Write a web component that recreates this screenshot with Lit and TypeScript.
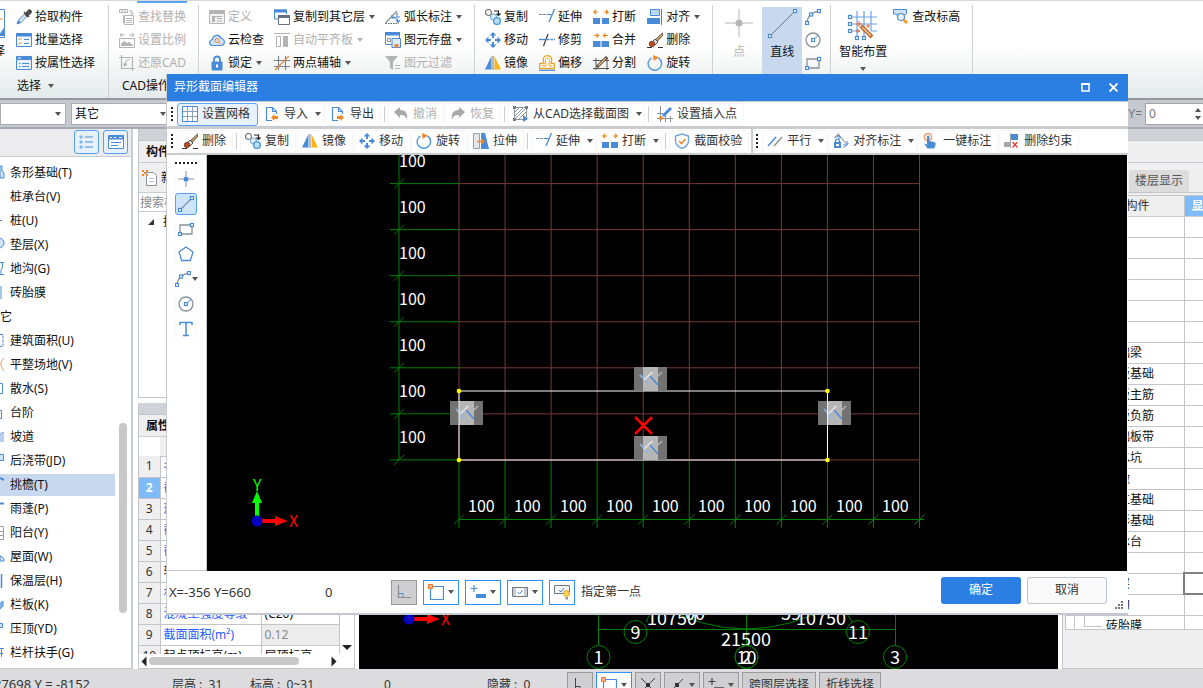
import { LitElement, html, svg, css, nothing } from "lit";
import { customElement } from "lit/decorators.js";
import { classMap } from "lit/directives/class-map.js";

const B = "#4a8bd8";
const G = "#8a9199";
const D = "#b4b4b4";
const O = "#f08a2c";

const node = (x: number, y: number) =>
  svg`<rect x=${x - 1.5} y=${y - 1.5} width="3" height="3" fill="#fff" stroke=${B} stroke-width="1.2"/>`;

const erase = svg`<path d="M0 15.5H5M11 15.5H16" stroke="#333"/><path d="M15.5 1 7 9l2 2 7-8z" fill="#c9a06a" stroke="#4a3a2c" stroke-width=".8"/><path d="m8 7-3 3 3 3 3-3z" fill="#ddd" stroke="#333" stroke-width=".8"/><circle cx="5" cy="12" r="2.8" fill="#c4471c" stroke="#333" stroke-width=".6"/>`;
const breakIcon = svg`<path d="M0 9h7v6H0zM9 9h7v6H9z" fill=${B}/><path d="M5 3H1M3 1 1 3l2 2M11 3h4M13 1l2 2-2 2" fill="none" stroke="#e8861c" stroke-width="1.2"/>`;
const arcIcon = svg`<path d="M2 14C2 8 7 3 14 2" fill="none" stroke=${G} stroke-width="1.3"/>${node(2, 14)}${node(6, 5.500)}${node(14, 2)}`;
const circleIcon = svg`<circle cx="8" cy="8" r="7" fill="none" stroke=${G} stroke-width="1.3"/><path d="m8 8 5-4.500" stroke=${B}/>${node(8, 8)}`;
const rectIcon = svg`<path d="M2 4h12v9H2z" fill="none" stroke=${G} stroke-width="1.3"/>${node(2, 13)}${node(14, 4)}`;
const lineIcon = svg`<path d="M1 15 15 1" stroke=${G} stroke-width="1.2"/>${node(2, 14)}${node(14, 2)}`;

const ICONS: Record<string, unknown> = {
  picker: svg`<path d="M1 15l1.500-4L9 4.500 11.500 7 5 13.500z" fill="#cfe3f8" stroke="#6b8db5"/><path d="M1 15l1.500-4 2.500 2.500z" fill=${B}/><path d="M8 3l5 5M9.500 5.500l2.500-3.500c2-2 4 0 2.500 2L11 7z" fill="#555" stroke="#444" stroke-width="1.6"/>`,
  batch: svg`<path d="M.5 1.500h15v13H.5z" fill="#f4f9ff" stroke=${B}/><path d="M.5 1.500h15v3H.5z" fill=${B}/><path d="m2.500 7 1 1 2-2M2.500 11l1 1 2-2" fill="none" stroke="#d8892c"/><path d="M8 7.500h5M8 11.500h5" stroke=${B}/>`,
  attr: svg`<path d="M.5 1.500h15v13H.5z" fill="#e8f2fd" stroke=${B}/><path d="M.5 1.500h15v3.500H.5z" fill=${B}/><path d="M2 3h3" stroke="#e8f2fd"/><path d="M3 8.500h1.500M6 8.500h7M3 11.500h1.500M6 11.500h7" stroke=${B}/>`,
  find: svg`<path d="M.5.500h8v3h-8zM3 .5v3M6 .5v3M10 2h3v3M11.500 4 13 5.500 14.500 4M5.500 6.500h9v9h-9zM7 9.500h6M7 11.500h6M7 13.500h6M4.500 6v8" fill="none" stroke=${D}/>`,
  scale: svg`<path d="M1 3h5M10 3h5M3 1 1 3l2 2M13 1l2 2-2 2M.5 6.500h15v9H.5z" fill="none" stroke=${D}/><path d="M2 14v-2l3-3 3 2 2-1 4 3v1z" fill=${D}/>`,
  restore: svg`<path d="M2.500 0v13.500H16M0 2.500h13.500V16M11 4.500C7 4.500 6 7 6 10.500M4 8.500 6 11l2-2.500" fill="none" stroke=${D} stroke-width="1.2"/>`,
  define: svg`<path d="M.5 1.500h15v13H.5z" fill="#f2f2f2" stroke=${D}/><path d="M.5 1.500h15v3.500H.5zM8 9h5v1H8zM8 11.500h5v1H8zM3 8h3v5H3zM3 7h10v1H3z" fill=${D}/>`,
  cloud: svg`<path d="M4 13.500C-.5 13.500 0 8 3.500 7.500 4 2.500 11 2 12 6.500c4.500.3 4.500 7 0 7z" fill="#cfe4fa" stroke=${B} stroke-width="1.2"/><circle cx="8" cy="8.500" r="2" fill="none" stroke=${O}/><path d="m9.500 10 2 2" stroke=${O}/>`,
  lock: svg`<path d="M5 8V4.500c0-4 6-4 6 0V8" fill="none" stroke=${B} stroke-width="1.8"/><rect x="2.500" y="6.500" width="11" height="9" rx="1" fill=${B}/><path d="M8 9.500v3" stroke="#fff" stroke-width="2"/>`,
  copylayer: svg`<path d="M.5 1v9H5M.5 1h12v4" fill="none" stroke=${B}/><path d="M0 .5h13v3H0z" fill=${B}/><path d="M4.500 6.500h11v9h-11z" fill="#fff" stroke="#66707c"/><path d="M4 6h12v3H4z" fill="#66707c"/>`,
  autoflat: svg`<path d="M0 1.500h16M2.500 4.500h4v10h-4z" fill="none" stroke=${D}/><path d="M9 4h5v11H9z" fill=${D}/>`,
  auxaxis: svg`<path d="M4.500 1v14M11.500 1v14M0 5.500h16M0 11.500h16" stroke="#77808a" stroke-width="1.1"/><path d="M1 15 15 1" stroke="#e08a3c" stroke-width="1.2"/>`,
  arclen: svg`<path d="M.5 14 12 2" stroke=${G} stroke-width="1.2"/><path d="M.5 14.500h13" stroke="#666" stroke-dasharray="1.500 1"/><path d="M7 8c4 0 6 2 6 5M7 6v3h3M11 11l2 2.500 2-2.500M12 4v4h3" fill="none" stroke=${B} stroke-width="1.2"/>`,
  save: svg`<path d="M.5.500h14v12h-14z" fill="#fff" stroke=${B}/><path d="M0 0h15v3.500H0z" fill=${B}/><path d="M2.500 6.500h3v3h-3z" fill="none" stroke=${G}/><path d="M7 6.500h8.500v9H7z" fill="#dcebfb" stroke=${B}/><path d="M9.500 12h4v3.500h-4z" fill=${O}/>`,
  filter: svg`<path d="M0 1h13L8 7v8l-3-2V7z" fill=${D}/><path d="M10 10.500h5M10 13.500h5" stroke=${D}/>`,
  copy: svg`<circle cx="3.500" cy="3.500" r="3" fill="#fff" stroke="#777" stroke-width="1.2"/><circle cx="8.500" cy="8" r="3" fill="#e8f2fd" stroke="#79a8d8" stroke-width="1.2"/><circle cx="12" cy="12" r="3.400" fill="#b9dcf5" stroke="#4a9bd8" stroke-width="1.400"/><path d="M9 2h4.500v4M11.500 4.500l2 2 2-2" fill="none" stroke="#222" stroke-width="1.200"/>`,
  move: svg`<path d="M8 0l3.500 3.500h-7zM8 16l3.500-3.500h-7zM0 8l3.500-3.500v7zM16 8l-3.500-3.500v7z" fill=${B}/><path d="M8 3v3M8 10v3M3 8h3M10 8h3" stroke=${B} stroke-width="2"/>`,
  mirror: svg`<path d="M0 14.500 6.500 1v13.500z" fill=${B}/><path d="M16 14.500 9.500 1v13.500z" fill="#fbb415"/><path d="M8 1v14" stroke="#777"/>`,
  extend: svg`<path d="M0 5.500h9" stroke="#7d8790" stroke-dasharray="3 1"/><path d="M9 5.500h3.500" stroke=${B} stroke-width="1.200"/><path d="M15.500 0 10 13" stroke=${B} stroke-width="1.300"/>`,
  trim: svg`<path d="M0 7.500h6" stroke=${B} stroke-width="1.400"/><path d="M8 7.500h8" stroke=${B} stroke-width="1.400" stroke-dasharray="2.500 1"/><path d="M9 2 4.500 14" stroke="#333" stroke-width="1.200"/>`,
  offset: svg`<path d="M5 8.500C3 3 5 .7 8.500.7S14 3 12 8.500h3.300v5H.7v-5z" fill="#fff" stroke="#eaa52c" stroke-width="1.300"/><path d="M3 11h4c.8-2-.8-4-.8-5.500 0-3 4.600-3 4.600 0C10.800 7 9.500 9 10 11h3.500" fill="none" stroke="#eaa52c"/><path d="M0 15.300h16" stroke=${B} stroke-width="1.200"/>`,
  break: breakIcon,
  merge: svg`<path d="M0 9h7.500v6H0zM8.500 9H16v6H8.500z" fill=${B}/><path d="M1 3.500h4.500M3.500 1.500 5.500 3.500l-2 2M15 3.500h-4.500M12.500 1.500l-2 2 2 2" fill="none" stroke="#e8861c" stroke-width="1.200"/>`,
  split: svg`<path d="M0 5.500h16M3 3v12M14 3v12M0 13.500h16" stroke="#555"/><path d="M4 12 14 2" stroke="#4d3a2b" stroke-width="3"/><path d="M5 11l8-8" stroke="#e9c08a" stroke-width="1.200"/>`,
  align: svg`<path d="M3.500.500h9v6h-9z" fill="#bcd9f7" stroke=${B}/><path d="M0 9h13v6H0z" fill=${B}/><path d="M14.500 0v16" stroke="#777"/>`,
  erase,
  rotate: svg`<path d="M4.500 2.800a6.700 6.700 0 1 0 7 .2" fill="none" stroke="#5a9ae0" stroke-width="1.500"/><path d="M6 0l6 2.500L6.500 6z" fill=${O}/>`,
  rect: rectIcon,
  arc: arcIcon,
  circle: circleIcon,
  line: lineIcon,
  elev: svg`<path d="M.5.500h13v4l-5 4.500h-3L3.500 5H.5z" fill="#cfe3f8" stroke=${B}/><circle cx="8" cy="8" r="3.500" fill="#e8f2fd" stroke="#5b8bc0" stroke-width="1.200"/><path d="m11 11 3 3" stroke="#f0a01c" stroke-width="3"/>`,
  grid: svg`<path d="M.5.500h15v15H.5z" fill="#fff" stroke=${B}/><path d="M5.500 1v14M10.500 1v14M1 5.500h14M1 10.500h14" stroke="#8fa3b8"/>`,
  import: svg`<path d="M8 14.500H2.500v-13h6l4 4V8M8.500 1.500v4h4" fill="none" stroke=${B} stroke-width="1.200"/><path d="M7 11.500l3.500-3.500v2H14v3h-3.500v2z" fill=${O}/>`,
  export: svg`<path d="M8 14.500H2.500v-13h6l4 4V8M8.500 1.500v4h4" fill="none" stroke=${B} stroke-width="1.200"/><path d="M14 11.500l-3.500-3.500v2H7v3h3.500v2z" fill=${O}/>`,
  undo: svg`<path d="M1 6l6-5v3c6 0 8 4 7 10-1-4-3-5-7-5v3z" fill="#a8a8a8"/>`,
  redo: svg`<path d="M15 6 9 1v3c-6 0-8 4-7 10 1-4 3-5 7-5v3z" fill="#a8a8a8"/>`,
  fromcad: svg`<path d="M1.500 1.500h12v12h-12z" fill="none" stroke="#8a929b"/><path d="M2 6 6 2M2 10l8-8M2 13 13 2M6 13l7-7" stroke="#8a929b"/><path d="M0 0h3v3H0zM12 0h3v3h-3zM0 12h3v3H0z" fill="#77808a"/><path d="M10 9v7l5-3z" fill=${B}/>`,
  insertpt: svg`<path d="M3.500 0v16M8.500 6v10M0 12.500h16M0 7.500h6M13.500 10v6" stroke="#8a929b"/><path d="m6 10 8-8" stroke=${B} stroke-width="3"/><circle cx="4" cy="12" r="2" fill=${O}/>`,
  stretch: svg`<path d="M.5.500h6v15h-6z" fill="#e6e8ec" stroke="#999fa8"/><path d="M8 0h4l4 16H8z" fill=${B}/><path d="M4 8.500h6M8 6l3 2.500L8 11" fill="none" stroke=${O} stroke-width="1.300"/>`,
  check: svg`<path d="M8 1l6.500 2v5c0 4-3 6-6.500 7.500C4.500 14 1.500 12 1.500 8V3z" fill="#fff" stroke="#6ea4e0" stroke-width="1.400"/><path d="m5 8 2.500 2.500L11.500 6" fill="none" stroke=${O} stroke-width="1.600"/>`,
  parallel: svg`<path d="M1 13 9 4" stroke=${B} stroke-width="1.500"/><path d="M7 13l8-9" stroke=${G} stroke-width="1.500"/>`,
  aligndim: svg`<path d="M1.500 5 6 .5M6 2.500l8 9" fill="none" stroke=${G} stroke-width="1.100"/><path d="M6 2v4M4 4.500 6 2l2 3M14 8v4h-4M10.500 15 15.500 10" fill="none" stroke=${B}/><path d="M2.500 9V8c0-2.500 4-2.500 4 0v1" fill="none" stroke=${B} stroke-width="1.300"/><path d="M1 9h7v6H1z" fill=${B}/><path d="M3 11h3v2H3z" fill="#fff"/>`,
  onekey: svg`<circle cx="5" cy="4" r="3.600" fill="none" stroke="#f09a6a" stroke-width="1.500"/><path d="M4 4c0-2 2.500-2 2.500 0v4l6 1.500v3L11 15.500H4.500L1 10.500l3 1z" fill=${B}/>`,
  delcon: svg`<path d="M7 1h7v6H7z" fill=${B}/><path d="M0 9h6v5H0z" fill="#a2a6ac"/><path d="M6.500 0v15" stroke="#a2a6ac"/><path d="m8.500 9 5 5.500M13.500 9l-5 5.500" stroke="#e0382c" stroke-width="1.200"/>`,
  dot: svg`<path d="M8 0v5M8 11v5M0 8h5M11 8h5" stroke=${G}/><circle cx="8" cy="8" r="2.600" fill=${B}/>`,
  polygon: svg`<path d="M8 1l7 5-2.700 8.500H3.700L1 6z" fill="none" stroke=${B} stroke-width="1.300"/>`,
  text: svg`<path d="M2 4V1.500h12V4M8 1.500v13M5 14.500h6" fill="none" stroke=${B} stroke-width="1.500"/>`,
  list: svg`<path d="M1 2h2v2H1zM1 7h2v2H1zM1 12h2v2H1z" fill="#7db5f3" stroke="#7db5f3"/><path d="M6 3h8M6 8h8M6 13h8" stroke=${B}/>`,
  card: svg`<path d="M.5 1.500h15v13H.5z" fill="#fff" stroke=${B}/><path d="M.5 1.500h15v4H.5z" fill=${B}/><path d="M2 3.500h2M6 3.500h2M11 3.500h3" stroke="#fff"/><path d="M3 8.500h10M3 11.500h7" stroke=${B}/>`,
  newdoc: svg`<path d="M4.500 2.500h7l3 3v10h-10z" fill="#fff" stroke="#8a9199"/><path d="M7 8.500h5M7 11.500h5" stroke="#b9bec4"/><path d="M0 0h2v2H0zM4 0h2v2H4zM2 2h2v2H2zM0 4h2v2H0zM4 4h2v2H4z" fill=${O}/>`,
  ortho: svg`<path d="M2.500 1v12.500H15" fill="none" stroke="#8c8c8c" stroke-width="1.200"/><path d="M3 9.500h4v4" fill="none" stroke=${B}/>`,
  orthoDark: svg`<path d="M3.500 1v12.500H15M4 9.500h4v4" fill="none" stroke="#444"/>`,
  snap: svg`<path d="M2.500 2.500h13v13h-13z" fill="#fff" stroke=${B} stroke-width="1.200"/><path d="M.5.500h4v4h-4z" fill="#f5b183" stroke="#ee7a30"/>`,
  dyn: svg`<path d="M4 1v7M.5 4.500h7" stroke=${B} stroke-width="1.200"/><path d="M6 10h10v4H6z" fill=${B}/>`,
  dynDark: svg`<path d="M4 1v7M.5 4.500h7" stroke="#444" stroke-width="1.200"/><path d="M6 10h10v4H6z" fill="#666"/>`,
  cross: svg`<path d="m1 1 14 14M15 1 1 15" stroke="#444"/><path d="M6 6h4v4H6z" fill="#333"/>`,
  mid: svg`<path d="M2 14 14 2" stroke="#444"/><path d="M6 6h4v4H6z" fill="#333"/>`,
  tick: svg`<path d="M.5 3.500h15v9H.5z" fill="#fff" stroke="#6d7884"/><path d="M1 4h3v8H1zM12 4h3v8h-3z" fill="#c9cdd2"/><path d="m5.500 8 2 2 3-4" fill="none" stroke=${B}/>`,
  bulb: svg`<path d="M.5 1.500h15v8H.5z" fill="#f2f4f6" stroke="#6d7884"/><path d="m5 6 2 2 3-4" fill="none" stroke=${B}/><circle cx="12.500" cy="9.500" r="3" fill="#fcd34f" stroke="#e0a820"/><path d="M11.500 13h2.500v2.500h-2.500z" fill="#999"/>`,
};

const icon = (name: string) =>
  html`<svg class="i" viewBox="0 0 16 16" aria-hidden="true">${ICONS[name]}</svg>`;
const caret = html`<span class="caret"></span>`;

interface Item { i: string; t: string; off?: boolean; more?: boolean; on?: boolean }
const it = (i: string, t: string, flags = ""): Item => ({
  i, t, off: flags.includes("x"), more: flags.includes("v"), on: flags.includes("s"),
});

const EDIT_COLS: Item[][] = [
  [it("copy", "复制"), it("move", "移动"), it("mirror", "镜像")],
  [it("extend", "延伸"), it("trim", "修剪"), it("offset", "偏移")],
  [it("break", "打断"), it("merge", "合并"), it("split", "分割")],
  [it("align", "对齐", "v"), it("erase", "删除"), it("rotate", "旋转")],
];
const COMMON_COLS: Item[][] = [
  [it("define", "定义", "x"), it("cloud", "云检查"), it("lock", "锁定", "v")],
  [it("copylayer", "复制到其它层", "v"), it("autoflat", "自动平齐板", "xv"), it("auxaxis", "两点辅轴", "v")],
  [it("arclen", "弧长标注", "v"), it("save", "图元存盘", "v"), it("filter", "图元过滤", "x")],
];

const TREE: { t: string; p?: unknown; head?: boolean; on?: boolean }[] = [
  { t: "条形基础(T)", p: svg`<path d="M0 1h2v5l2 2v5H0z" fill="#cfe3f8" stroke="#4a8bd8"/>` },
  { t: "桩承台(V)" },
  { t: "桩(U)", p: svg`<path d="M0 7.500h2" stroke="#4a8bd8"/>` },
  { t: "垫层(X)", p: svg`<circle cx="-1" cy="6" r="5" fill="#cfe3f8" stroke="#4a8bd8"/>` },
  { t: "地沟(G)", p: svg`<path d="M0 1.500h4M0 13.500h4M2.500 2v4L1 9v4" fill="none" stroke="#4a8bd8"/>` },
  { t: "砖胎膜", p: svg`<path d="M1 1v13" stroke="#4a8bd8"/>` },
  { t: "其它", head: true },
  { t: "建筑面积(U)", p: svg`<path d="M0 1.500h3v12H0" fill="none" stroke="#4a8bd8" stroke-dasharray="3 1"/>` },
  { t: "平整场地(V)", p: svg`<path d="M4 1 1 5v4l3 5" fill="none" stroke="#e0a070"/>` },
  { t: "散水(S)", p: svg`<path d="M0 2.500h2.500v10H0" fill="none" stroke="#4a8bd8"/>` },
  { t: "台阶", p: svg`<path d="M0 5.500h1.500v8H0" fill="none" stroke="#4a8bd8"/>` },
  { t: "坡道", p: svg`<path d="M0 5 3 3v10M1 5v8" fill="none" stroke="#6f9fd8"/>` },
  { t: "后浇带(JD)", p: svg`<path d="M0 1.500h3.500v6H0" fill="#cfe3f8" stroke="#4a8bd8"/>` },
  { t: "挑檐(T)", p: svg`<path d="M0 1 4 3" stroke="#4a8bd8" stroke-width="2"/>`, on: true },
  { t: "雨蓬(P)", p: svg`<path d="M0 2.500h4" stroke="#4a8bd8" stroke-width="2"/>` },
  { t: "阳台(Y)", p: svg`<path d="M0 1.500h3.500v13H0M0 6.500h3.500M0 10.500h3.500" fill="none" stroke="#9a9fa6"/>` },
  { t: "屋面(W)", p: svg`<path d="M0 7h1l3 3v2H0z" fill="#cfe3f8" stroke="#4a8bd8"/>` },
  { t: "保温层(H)", p: svg`<path d="M1.500 1v14" stroke="#4a8bd8" stroke-width="1.500"/>` },
  { t: "栏板(K)", p: svg`<path d="M0 6.500 3 4v5l-3 3" fill="#8db9ea" stroke="#4a8bd8"/>` },
  { t: "压顶(YD)", p: svg`<path d="M0 2.500h2.500v4H0" fill="#cfe3f8" stroke="#4a8bd8"/>` },
  { t: "栏杆扶手(G)", p: svg`<path d="M0 3.500h4M1.500 4v8M0 8.500h3" stroke="#4a8bd8"/>` },
];

const PROPS: { n: string; v: string; plain?: boolean; dim?: boolean }[] = [
  { n: "名称", v: "TY-1" }, { n: "截面形状", v: "异形" }, { n: "形状类型", v: "异形" },
  { n: "截面宽度(mm)", v: "800" }, { n: "截面高度(mm)", v: "150" }, { n: "轴线距左边", v: "(400)", plain: true },
  { n: "材质", v: "混凝土" }, { n: "混凝土强度等级", v: "(C20)" },
  { n: "截面面积(m²)", v: "0.12", dim: true }, { n: "起点顶标高(m)", v: "层顶标高", plain: true },
];

const LEVEL_ROWS = ["", "", "", "", "", "", "基础梁", "筏板基础", "筏板主筋", "筏板负筋", "基础板带", "集水坑",
  "柱墩", "独立基础", "条形基础", "桩承台", "桩", "垫层", "地沟", "砖胎膜"];

const ROW1: (Item | null)[] = [
  it("grid", "设置网格", "s"), it("import", "导入", "v"), it("export", "导出"), null,
  it("undo", "撤消", "x"), it("redo", "恢复", "x"), null,
  it("fromcad", "从CAD选择截面图", "v"), null, it("insertpt", "设置插入点"),
];
const ROW2A: (Item | null)[] = [
  it("erase", "删除"), null, it("copy", "复制"), it("mirror", "镜像"), it("move", "移动"),
  it("rotate", "旋转"), it("stretch", "拉伸"), null, it("extend", "延伸", "v"), it("break", "打断", "v"),
  null, it("check", "截面校验"),
];
const ROW2B: (Item | null)[] = [
  it("parallel", "平行", "v"), it("aligndim", "对齐标注", "v"), it("onekey", "一键标注"), it("delcon", "删除约束"),
];
const DRAW: [string, string][] = [
  ["dot", "点"], ["line", "直线"], ["rect", "矩形"], ["polygon", "多边形"], ["arc", "弧"], ["circle", "圆"], ["text", "文字"],
];

@customElement("app-root")
export class AppRoot extends LitElement {
  static styles = css`
    :host {
      display: flex; flex-direction: column; position: relative; height: 100vh; overflow: hidden;
      font: 12px/16px "Noto Sans", "Noto Sans CJK SC", sans-serif; color: #111; background: #fff;
    }
    * { box-sizing: border-box; }
    button, input, select { font: inherit; color: inherit; margin: 0; padding: 0; border: 0; background: none; border-radius: 0; }
    button { display: flex; align-items: center; white-space: nowrap; }
    button:disabled { color: #b0b0b0; }
    .i { width: 16px; height: 16px; flex: none; display: block; }
    .caret { width: 0; height: 0; flex: none; border: 3px solid transparent; border-top: 4px solid #555; border-bottom: 0; }
    :disabled > .caret { border-top-color: #b4b4b4; }

    .ribbon { flex: none; display: flex; padding: 4px 0 0; height: 100px; overflow: hidden; border-top: 1px solid #d5d8da;
      border-bottom: 2px solid #94979c; background: linear-gradient(#fff 45%, #e5eaea); position: relative; }
    .tab { position: absolute; left: 137px; top: -1px; width: 50px; height: 3px; background: #5ca5f5; }
    .group { display: flex; flex-direction: column; padding: 0 12px 0 10px; border-right: 1px solid #cfd2d4; flex: none; }
    .group.first { padding: 0 13px 0 0; }
    .cols { display: flex; gap: 11px; height: 69px; }
    .common .cols { gap: 10px; }
    .col { display: grid; grid-template-rows: repeat(3, 23px); }
    .col button { gap: 3px; }
    .col .caret { margin-left: 1px; }
    .glabel { display: flex; align-items: center; justify-content: center; gap: 7px; height: 24px; white-space: nowrap; }
    .first .glabel { justify-content: flex-start; padding-left: 17px; }
    .frag { width: 5px; height: 60px; overflow: hidden; position: relative; }
    .frag svg { display: block; margin-top: 4px; }
    .frag span { display: block; width: 24px; margin: 5px 0 0 -19px; }
    .shapes { padding: 0 9px 0 6px; }
    .shapes .cols { gap: 3px; }
    .big { flex-direction: column; width: 40px; padding-top: 2px; gap: 5px; }
    .big svg { width: 32px; height: 32px; display: block; }
    .big.on { background: #c8d9ef; margin-top: 2px; padding-top: 0; }
    .big.smart { width: 48px; padding-top: 4px; gap: 3px; }
    .big.smart .caret { margin-top: 4px; }
    .layout { padding-left: 8px; }
    .layout .cols { gap: 6px; }

    .combos { flex: none; display: flex; height: 29px; padding: 3px 0; gap: 5px; background: #c6c9d0; border-bottom: 2px solid #a6a9af; }
    .combo { position: relative; width: 66px; height: 22px; display: flex; align-items: center; }
    .combo.wide { width: 100px; }
    .combo select { appearance: none; width: 100%; height: 22px; padding-left: 3px; background: #fff; border: 1px solid #a9acb2; }
    .combo .caret { position: absolute; right: 5px; }
    .ylab { margin-left: auto; display: flex; align-items: center; height: 22px; color: #777; gap: 3px; }
    .spin { display: flex; width: 58px; height: 22px; background: #fff; border: 1px solid #a0a3a8; border-right: 0; }
    .spin input { width: 100%; min-width: 0; padding-left: 3px; }
    .updn { width: 10px; flex: none; display: flex; flex-direction: column; justify-content: center; align-items: center; gap: 4px; }
    .updn .caret:first-child { transform: rotate(180deg); }

    .main { flex: 1; min-height: 0; display: grid; grid-template-columns: 134px 217px 1fr 141px; grid-template-rows: 100%; gap: 0 4px; }
    .left { border-right: 2px solid #c9ccd2; width: 133px; display: flex; flex-direction: column; min-height: 0; border-bottom: 1px solid #c3c5cb; }
    .ltools { flex: none; height: 28px; display: flex; justify-content: flex-end; gap: 4px; padding: 1px 3px 0 0; background: #ececee; border-bottom: 1px solid #c9ccd2; }
    .ltools button { width: 25px; height: 24px; justify-content: center; border: 1px solid #56a0f2; border-radius: 3px; background: #e6f1fd; }
    .treebox { flex: 1; min-height: 0; overflow: hidden; position: relative; }
    .tree { margin: 0; padding: 4px 0 0; list-style: none; }
    .tree li { display: flex; align-items: center; height: 24px; width: 115px; gap: 5px; white-space: nowrap; }
    .tree li.on { height: 22px; margin: 1px 0; background: #c8d9ef; }
    .tree li.head span { margin-left: -12px; }
    .tree svg { width: 5px; height: 16px; flex: none; overflow: hidden; }
    .bar { position: absolute; left: 119px; top: 266px; width: 8px; height: 190px; border-radius: 4px; background: #c8c8c8; }

    .mid { display: grid; grid-template-rows: 1fr 266px; gap: 5px; min-height: 0; }
    .pane { border: 1px solid #c3c5cb; border-top: 0; display: flex; flex-direction: column; min-height: 0; overflow: hidden; }
    .strip { flex: none; height: 12px; background: #d0d2d8; border-bottom: 1px solid #c3c5cb; }
    .title { flex: none; height: 22px; padding: 3px 7px; background: #efefef; font-weight: 600; border-bottom: 1px solid #c9ccd2; }
    .ptools { flex: none; height: 30px; background: #efefef; border-bottom: 1px solid #c9ccd2; display: flex; align-items: center; padding-left: 3px; }
    .ptools button { gap: 3px; }
    .search { flex: none; height: 19px; padding-left: 1px; border-bottom: 1px solid #c9ccd2; width: 100%; }
    .search::placeholder { color: #888; opacity: 1; }
    .leaf { padding: 2px 0 0 9px; display: flex; gap: 9px; align-items: center; }
    .tri { width: 0; height: 0; border-left: 6px solid transparent; border-bottom: 6px solid #333; }
    .props { flex: 1; min-height: 0; display: flex; overflow: hidden; }
    table { border-collapse: collapse; table-layout: fixed; }
    .ptable { width: 201px; flex: none; height: 0; }
    .ptable td, .ptable th { height: 21px; padding: 0 0 0 3px; border-right: 1px solid #c3c5cb; border-bottom: 1px solid #c3c5cb; white-space: nowrap; overflow: hidden; line-height: 16px; font-weight: 400; text-align: left; }
    .ptable .hd td { height: 19px; background: #efefef; }
    .ptable .hd td:first-child { background: #fff; border: 0; width: 21px; padding: 0; }
    .ptable th { background: #efefef; color: #333; text-align: center; padding: 0; }
    .ptable .n { width: 101px; color: #1f5cff; }
    .ptable .n.plain { color: #111; }
    .ptable .sel th { background: #7fbbfa; color: #fff; font-weight: 700; }
    .ptable .dim { color: #888; background: #ececec; }
    .vs { flex: 1; display: flex; justify-content: center; align-items: flex-end; padding-bottom: 4px; }
    .vs .caret, .hs .caret { border-width: 5px; border-bottom: 0; border-top-color: #222; }
    .hs { flex: none; height: 14px; display: flex; align-items: center; justify-content: space-between; padding: 0 15px 0 0; }
    .hs .caret:first-child { transform: rotate(90deg); }
    .hs .caret:last-child { transform: rotate(-90deg); }
    .thumb { width: 151px; height: 8px; margin-right: 30px; border-radius: 4px; background: #c8c8c8; }

    .view { background: #000; min-width: 0; }
    .view svg, .stage svg { display: block; width: 100%; height: 100%; overflow: hidden; }
    .cad { font-family: "Noto Sans CJK SC", sans-serif; }

    .right { background: #efefef; border-left: 1px solid #c3c5cb; border-bottom: 1px solid #c3c5cb; overflow: hidden; }
    .rspace { height: 22px; border-bottom: 1px solid #c9ccd2; }
    .rtabs { height: 30px; padding: 7px 0 0 66px; border-bottom: 1px solid #c3c5cb; display: flex; }
    .rtabs button { height: 22px; padding: 0 6px; background: #dcdcdc; color: #555; border-radius: 3px 3px 0 0; }
    .lwrap { margin: 2px 0 0 2px; height: 435px; overflow: hidden; border: 1px solid #c3c5cb; border-right: 0; background: #fff; }
    .ltable { width: 160px; }
    .ltable th { height: 20px; font-weight: 400; background: #efefef; color: #333; border-bottom: 1px solid #c9ccd2; border-right: 1px solid #c3c5cb; padding: 0; }
    .ltable th:first-child { width: 118px; text-align: right; padding-right: 34px; }
    .ltable th.on { background: #7fbbfa; color: #fff; font-weight: 700; text-align: left; padding-left: 7px; }
    .ltable td { height: 21px; padding: 0 0 0 40px; border-right: 1px solid #c3c5cb; border-bottom: 1px solid #c3c5cb; white-space: nowrap; }
    .ltable td.focus { outline: 2px solid #808080; outline-offset: -1px; }
    .ltable tr:last-child td:first-child { background: linear-gradient(#c3c5cb, #c3c5cb) 8px 0 / 1px 100% no-repeat, linear-gradient(#c3c5cb, #c3c5cb) 18px 0 / 1px 10px no-repeat, linear-gradient(#c3c5cb, #c3c5cb) 18px 10px / 18px 1px no-repeat; }

    .status { flex: none; height: 19px; display: flex; background: #dcdcde; overflow: hidden; padding-top: 3px; color: #333; }
    .status > span { line-height: 25px; height: 25px; flex: none; white-space: pre; }
    .sa { width: 172px; } .sb { width: 78px; } .sc { width: 134px; } .sd { width: 103px; } .se { width: 80px; }
    .sa span { margin-left: -6px; font-size: 13px; }
    .tgls { display: flex; gap: 3px; }
    .tgl { height: 25px; min-width: 25px; justify-content: center; gap: 4px; padding: 0 4px; border: 1px solid #9a9a9c; background: #cfcfd1; }
    .tgl.on { border-color: #2f93f5; background: #fff; }
    .tgl.txt { padding: 0 6px; }

    .dialog { position: absolute; inset: 74px 75px 74px 167px; display: flex; flex-direction: column; background: #fff;
      border-bottom: 1px solid #bfc6d6; outline: 1px solid #c6c9d0; outline-offset: 0; clip-path: inset(0 0 -1px -1px); }
    .dtitle { flex: none; height: 28px; margin-left: -1px; background: #2c7fe2; color: #fff; display: flex; align-items: center; padding: 0 10px 1px 8px; border-bottom: 1px solid #c9ccd1; }
    .dtitle h1 { flex: 1; margin: 0; font-size: 12px; line-height: 16px; font-weight: 400; }
    .dtitle button { width: 28px; justify-content: flex-end; }
    .dtitle svg { width: 9px; height: 9px; }
    .tb { flex: none; display: flex; align-items: center; height: 26px; padding: 0 0 0 4px; gap: 1px; border-bottom: 2px solid #c9ccd1; color: #333; }
    .tb.one { height: 27px; border-bottom-width: 3px; }
    .dots { width: 2px; height: 14px; margin-right: 3px; flex: none; background: repeating-linear-gradient(#222 0 2px, transparent 2px 4px); }
    .tb button { height: 23px; padding: 0 6px 0 4px; gap: 4px; border: 1px solid #f6f6f7; border-radius: 3px; }
    .tb button.more { padding-right: 2px; }
    .tb .caret { margin-left: 3px; }
    .tb button.on { border-color: #5aa3f3; background: #e7f2fe; padding-right: 7px; }
    .sep { width: 1px; height: 16px; margin: 0 2px; background: #c9ccd1; }
    .split { width: 2px; height: 24px; margin: 0 2px 0 1px; background: #c9ccd1; }
    .body { flex: 1; min-height: 0; display: flex; }
    .side { width: 40px; flex: none; border-right: 1px solid #c6c9d0; border-bottom: 1px solid #c6c9d0; padding: 7px 0 0 8px; display: flex; flex-direction: column; gap: 3px; }
    .hdots { width: 22px; height: 2px; margin-bottom: 1px; background: repeating-linear-gradient(90deg, #222 0 2px, transparent 2px 4px); }
    .side button { width: 22px; height: 22px; justify-content: center; border-radius: 3px; border: 1px solid #fafafa; flex: none; }
    .side button.on { border-color: #56a0f2; background: #cce4fd; }
    .side button.more { width: 28px; margin-left: -3px; gap: 1px; }
    .stage { flex: 1; min-width: 0; background: #000; margin-right: 1px; }
    .foot { flex: none; height: 42px; display: flex; align-items: center; padding: 0 21px 0 2px; gap: 6px; color: #333; position: relative; }
    .xy { width: 150px; font-size: 13px; white-space: nowrap; }
    .z { width: 60px; font-size: 13px; }
    .ok, .cancel { width: 80px; height: 27px; justify-content: center; border-radius: 3px; margin-bottom: 4px; }
    .ok { background: #2c7fe2; color: #fff; margin-left: auto; }
    .cancel { border: 1px solid #bcc3d3; background: #fafafa; }
    .grip { position: absolute; right: 4px; bottom: 3px; width: 9px; height: 9px; }
  `;

  private ribbonCol(items: Item[]) {
    return html`<div class="col">${items.map(
      (b) => html`<button ?disabled=${b.off}>${icon(b.i)}<span>${b.t}</span>${b.more ? caret : nothing}</button>`)}</div>`;
  }

  private tools(items: (Item | null)[]) {
    return items.map((b) => b
      ? html`<button class=${classMap({ on: !!b.on, more: !!b.more })} ?disabled=${b.off}>${icon(b.i)}<span>${b.t}</span>${b.more ? caret : nothing}</button>`
      : html`<span class="sep"></span>`);
  }

  private axes(x: number, y: number) {
    return svg`<path d="M${x} ${y}h20" stroke="red" stroke-width="4"/><path d="M${x + 18} ${y - 5}l13 5-13 5z" fill="red"/>
      <path d="M${x} ${y}v-20" stroke="lime" stroke-width="4"/><path d="M${x - 5} ${y - 18}l5-12 5 12z" fill="lime"/>
      <circle cx=${x} cy=${y} r="5.500" fill="#0000c0"/>
      <text x=${x + 32} y=${y + 6} fill="red" font-size="16">X</text><text x=${x - 4} y=${y - 30} fill="lime" font-size="16">Y</text>`;
  }

  private stage() {
    const step = 46.05;
    const xs = Array.from({ length: 11 }, (_, k) => 252 + step * k);
    const ys = Array.from({ length: 7 }, (_, k) => 304.9 - step * k);
    const mark = (x: number, y: number) => svg`<g transform="translate(${x} ${y})">
      <path d="M0 0h33v24H0z" fill="#787878" fill-opacity=".95"/><path d="M9 0h15v24H9z" fill="#b6b6b6"/>
      <path d="M6 8l8.500 9" stroke="#8db9ea" stroke-width="1.500"/><path d="M10 13l8.500-8" stroke="#e6e6e6" stroke-width="1.500"/>
      <path d="M16 9l8 9" stroke="#4a8bd8" stroke-width="1.500"/><path d="M21 12l7-7" stroke="#b4b4b4" stroke-width="1.500"/></g>`;
    return html`<svg class="cad" role="img" aria-label="截面绘图区">
      <g stroke="#783838">
        ${xs.map((x) => svg`<path d="M${x} 0V304.900"/>`)}
        ${ys.map((y) => svg`<path d="M252 ${y}H712.500"/>`)}
      </g>
      <g stroke="#008200" fill="none">
        <path d="M192 0V305M252 364.500H717"/>
        ${ys.map((y) => svg`<path d="M183 ${y}H252M187 ${y + 5}l10-10"/>`)}
        ${xs.map((x) => svg`<path d="M${x} 305V373M${x - 5} 369.500l10-10"/>`)}
      </g>
      <g fill="#fff" font-size="16">
        ${ys.map((_, k) => svg`<text x="192" y=${288 - 46 * k}>100</text>`)}
        ${xs.slice(0, 10).map((_, k) => svg`<text x=${261 + 46 * k} y="357">100</text>`)}
      </g>
      <path d="M252 236H620.500V305H252z" fill="none" stroke="#fff"/>
      ${mark(427, 212)}${mark(243, 246)}${mark(611, 246)}${mark(427, 281)}
      <path d="M252 246v24M620.500 246v24" stroke="#fff" stroke-opacity=".8"/>
      ${[[252, 236], [620.5, 236], [252, 305], [620.5, 305]].map(([x, y]) => svg`<circle cx=${x} cy=${y} r="2.300" fill="#ff0"/>`)}
      <path d="M428 262l17 17M445 262l-17 17" stroke="red" stroke-width="2.500"/>
      ${this.axes(50, 366)}
    </svg>`;
  }

  private plan() {
    const bubble = (x: number, y: number, t: string) =>
      svg`<circle cx=${x} cy=${y} r="11.500" fill="none" stroke="#008200"/><text x=${x} y=${y + 7} text-anchor="middle">${t}</text>`;
    return html`<svg class="cad" role="img" aria-label="平面图">
      <path d="M239.500 400V516M387.500 400V516M536.500 400V516M239 500.500H537M287 493l6-12M493 493l-8-13M300 476Q387 524 474 476" fill="none" stroke="#008200"/>
      <g fill="#fff" font-size="18">
        <text x="288" y="496">10750</text><text x="326" y="491">00</text>
        <text x="422" y="491">59</text><text x="437" y="496">10750</text>
        <text x="362" y="517">21500</text>
        ${bubble(239.5, 528, "1")}${bubble(387.5, 528, "10")}${bubble(387.5, 528, "2")}${bubble(536, 528, "3")}
        ${bubble(276.5, 503, "9")}${bubble(499, 503, "11")}
      </g>
      ${this.axes(50, 490)}
    </svg>`;
  }

  render() {
    return html`
      <header class="ribbon">
        <div class="tab"></div>
        <section class="group first">
          <div class="cols">
            <div class="frag"><svg width="5" height="29"><path d="M-8 .5H4.500v28H-8" fill="#fff" stroke=${B}/><path d="M-2 27l6-8v8z" fill=${B}/><path d="M0 10h3" stroke=${O}/></svg><span>选择</span></div>
            ${this.ribbonCol([it("picker", "拾取构件"), it("batch", "批量选择"), it("attr", "按属性选择")])}
          </div>
          <div class="glabel">选择 ${caret}</div>
        </section>
        <section class="group">
          <div class="cols">${this.ribbonCol([it("find", "查找替换", "x"), it("scale", "设置比例", "x"), it("restore", "还原CAD", "x")])}</div>
          <div class="glabel">CAD操作 ${caret}</div>
        </section>
        <section class="group common"><div class="cols">${COMMON_COLS.map((c) => this.ribbonCol(c))}</div></section>
        <section class="group"><div class="cols">${EDIT_COLS.map((c) => this.ribbonCol(c))}</div></section>
        <section class="group shapes">
          <div class="cols">
            <button class="big" disabled><svg viewBox="0 0 32 32"><path d="M16 2v28M2 16h28" stroke=${D}/><circle cx="16" cy="16" r="3.500" fill=${D}/></svg><span>点</span></button>
            <button class="big on"><svg viewBox="0 0 32 32"><path d="M4 29 29 4" stroke="#6b7680"/>${node(4, 29)}${node(29, 4)}</svg><span>直线</span></button>
            <div class="col">
              <button aria-label="弧">${icon("arc")}</button>
              <button aria-label="圆">${icon("circle")}</button>
              <button aria-label="矩形">${icon("rect")}</button>
            </div>
          </div>
        </section>
        <section class="group layout">
          <div class="cols">
            <button class="big smart"><svg viewBox="0 0 32 32">
              <path d="M10 2v28M17 2v28M24 2v20M3 8h27M3 15h27M3 22h10M24 22h6" stroke="#6ba3e6" stroke-width="1.200"/>
              ${node(3, 8)}${node(3, 15)}${node(3, 22)}${node(10, 29)}${node(17, 29)}
              <path d="m14 17 11 11" stroke="#b9652c" stroke-width="4"/><path d="m15 18 9 9" stroke="#f5c58c" stroke-width="1.500"/>
              <path d="M12 12v6M9 15h6M21 15v4M19 17h4M11 20v4M9 22h4" stroke="#f0642c"/></svg><span>智能布置</span>${caret}</button>
            ${this.ribbonCol([it("elev", "查改标高")])}
          </div>
        </section>
      </header>

      <div class="combos">
        <div class="combo"><select aria-label="楼层"><option></option></select>${caret}</div>
        <div class="combo wide"><select aria-label="构件类型"><option>其它</option></select>${caret}</div>
        <div class="ylab"><label for="yv">Y=</label>
          <div class="spin"><input id="yv" value="0" /><span class="updn">${caret}${caret}</span></div></div>
      </div>

      <div class="main">
        <nav class="left">
          <div class="ltools"><button aria-label="列表">${icon("list")}</button><button aria-label="卡片">${icon("card")}</button></div>
          <div class="treebox">
            <ul class="tree">
              ${TREE.map((r) => html`<li class=${classMap({ on: !!r.on, head: !!r.head })}>
                ${r.head ? nothing : html`<svg viewBox="0 0 5 16">${r.p ?? nothing}</svg>`}<span>${r.t}</span></li>`)}
            </ul>
            <div class="bar"></div>
          </div>
        </nav>

        <div class="mid">
          <section class="pane">
            <div class="strip"></div><div class="title">构件列表</div>
            <div class="ptools"><button>${icon("newdoc")}<span>新建</span></button></div>
            <input class="search" placeholder="搜索构件..." aria-label="搜索构件" />
            <div class="leaf"><span class="tri"></span>挑檐</div>
          </section>
          <section class="pane">
            <div class="strip"></div><div class="title">属性列表</div>
            <div class="props">
              <table class="ptable"><tbody>
                <tr class="hd"><td></td><td class="n"></td><td></td></tr>
                ${PROPS.map((p, k) => html`<tr class=${classMap({ sel: k === 1 })}><th>${k + 1}</th>
                  <td class=${classMap({ n: true, plain: !!p.plain })}>${p.n}</td><td class=${classMap({ dim: !!p.dim })}>${p.v}</td></tr>`)}
              </tbody></table>
              <div class="vs">${caret}</div>
            </div>
            <div class="hs">${caret}<span class="thumb"></span>${caret}</div>
          </section>
        </div>

        <div class="view">${this.plan()}</div>

        <aside class="right">
          <div class="strip"></div><div class="rspace"></div>
          <div class="rtabs"><button>楼层显示</button></div>
          <div class="lwrap"><table class="ltable">
            <thead><tr><th>构件</th><th class="on">显示</th></tr></thead>
            <tbody>${LEVEL_ROWS.map((t, k) => html`<tr><td>${t}</td><td class=${classMap({ focus: k === 17 })}></td></tr>`)}</tbody>
          </table></div>
        </aside>
      </div>

      <footer class="status">
        <span class="sa"><span>27698 Y = -8152</span></span><span class="sb">层高 :  31</span><span class="sc">标高 :  0~31</span>
        <span class="sd">0</span><span class="se">隐藏 :  0</span>
        <div class="tgls">
          <button class="tgl" aria-label="正交">${icon("orthoDark")}</button>
          <button class="tgl on" aria-label="捕捉">${icon("snap")}${caret}</button>
          <button class="tgl" aria-label="交点">${icon("cross")}</button>
          <button class="tgl" aria-label="中点">${icon("mid")}${caret}</button>
          <button class="tgl" aria-label="动态输入">${icon("dynDark")}${caret}</button>
          <button class="tgl txt">跨图层选择</button><button class="tgl txt">折线选择</button>
        </div>
      </footer>

      <div class="dialog" role="dialog" aria-label="异形截面编辑器">
        <div class="dtitle"><h1>异形截面编辑器</h1>
          <button aria-label="最大化"><svg viewBox="0 0 9 9"><path d="M1 1h7v7H1z" fill="none" stroke="#fff" stroke-width="1.500"/><path d="M0 1h9" stroke="#fff" stroke-width="2"/></svg></button>
          <button aria-label="关闭"><svg viewBox="0 0 9 9"><path d="m.5.500 8 8M8.500.500l-8 8" stroke="#fff" stroke-width="1.800"/></svg></button>
        </div>
        <div class="tb one"><span class="dots"></span>${this.tools(ROW1)}</div>
        <div class="tb"><span class="dots"></span>${this.tools(ROW2A)}<span class="split"></span><span class="dots"></span>${this.tools(ROW2B)}</div>
        <div class="body">
          <div class="side"><span class="hdots"></span>
            ${DRAW.map(([i, t]) => html`<button aria-label=${t} class=${classMap({ on: i === "line", more: i === "arc" })}>${icon(i)}${i === "arc" ? caret : nothing}</button>`)}
          </div>
          <div class="stage">${this.stage()}</div>
        </div>
        <div class="foot">
          <span class="xy">X=-356 Y=660</span><span class="z">0</span>
          <button class="tgl" aria-label="正交">${icon("ortho")}</button>
          <button class="tgl on" aria-label="捕捉">${icon("snap")}${caret}</button>
          <button class="tgl on" aria-label="动态输入">${icon("dyn")}${caret}</button>
          <button class="tgl on" aria-label="约束">${icon("tick")}${caret}</button>
          <button class="tgl on" aria-label="提示">${icon("bulb")}</button>
          <span>指定第一点</span>
          <button class="ok">确定</button><button class="cancel">取消</button>
          <svg class="grip" viewBox="0 0 9 9"><path d="M6 0h2v2H6zM3 3h2v2H3zM6 3h2v2H6zM0 6h2v2H0zM3 6h2v2H3zM6 6h2v2H6z" fill="#777"/></svg>
        </div>
      </div>`;
  }
}
